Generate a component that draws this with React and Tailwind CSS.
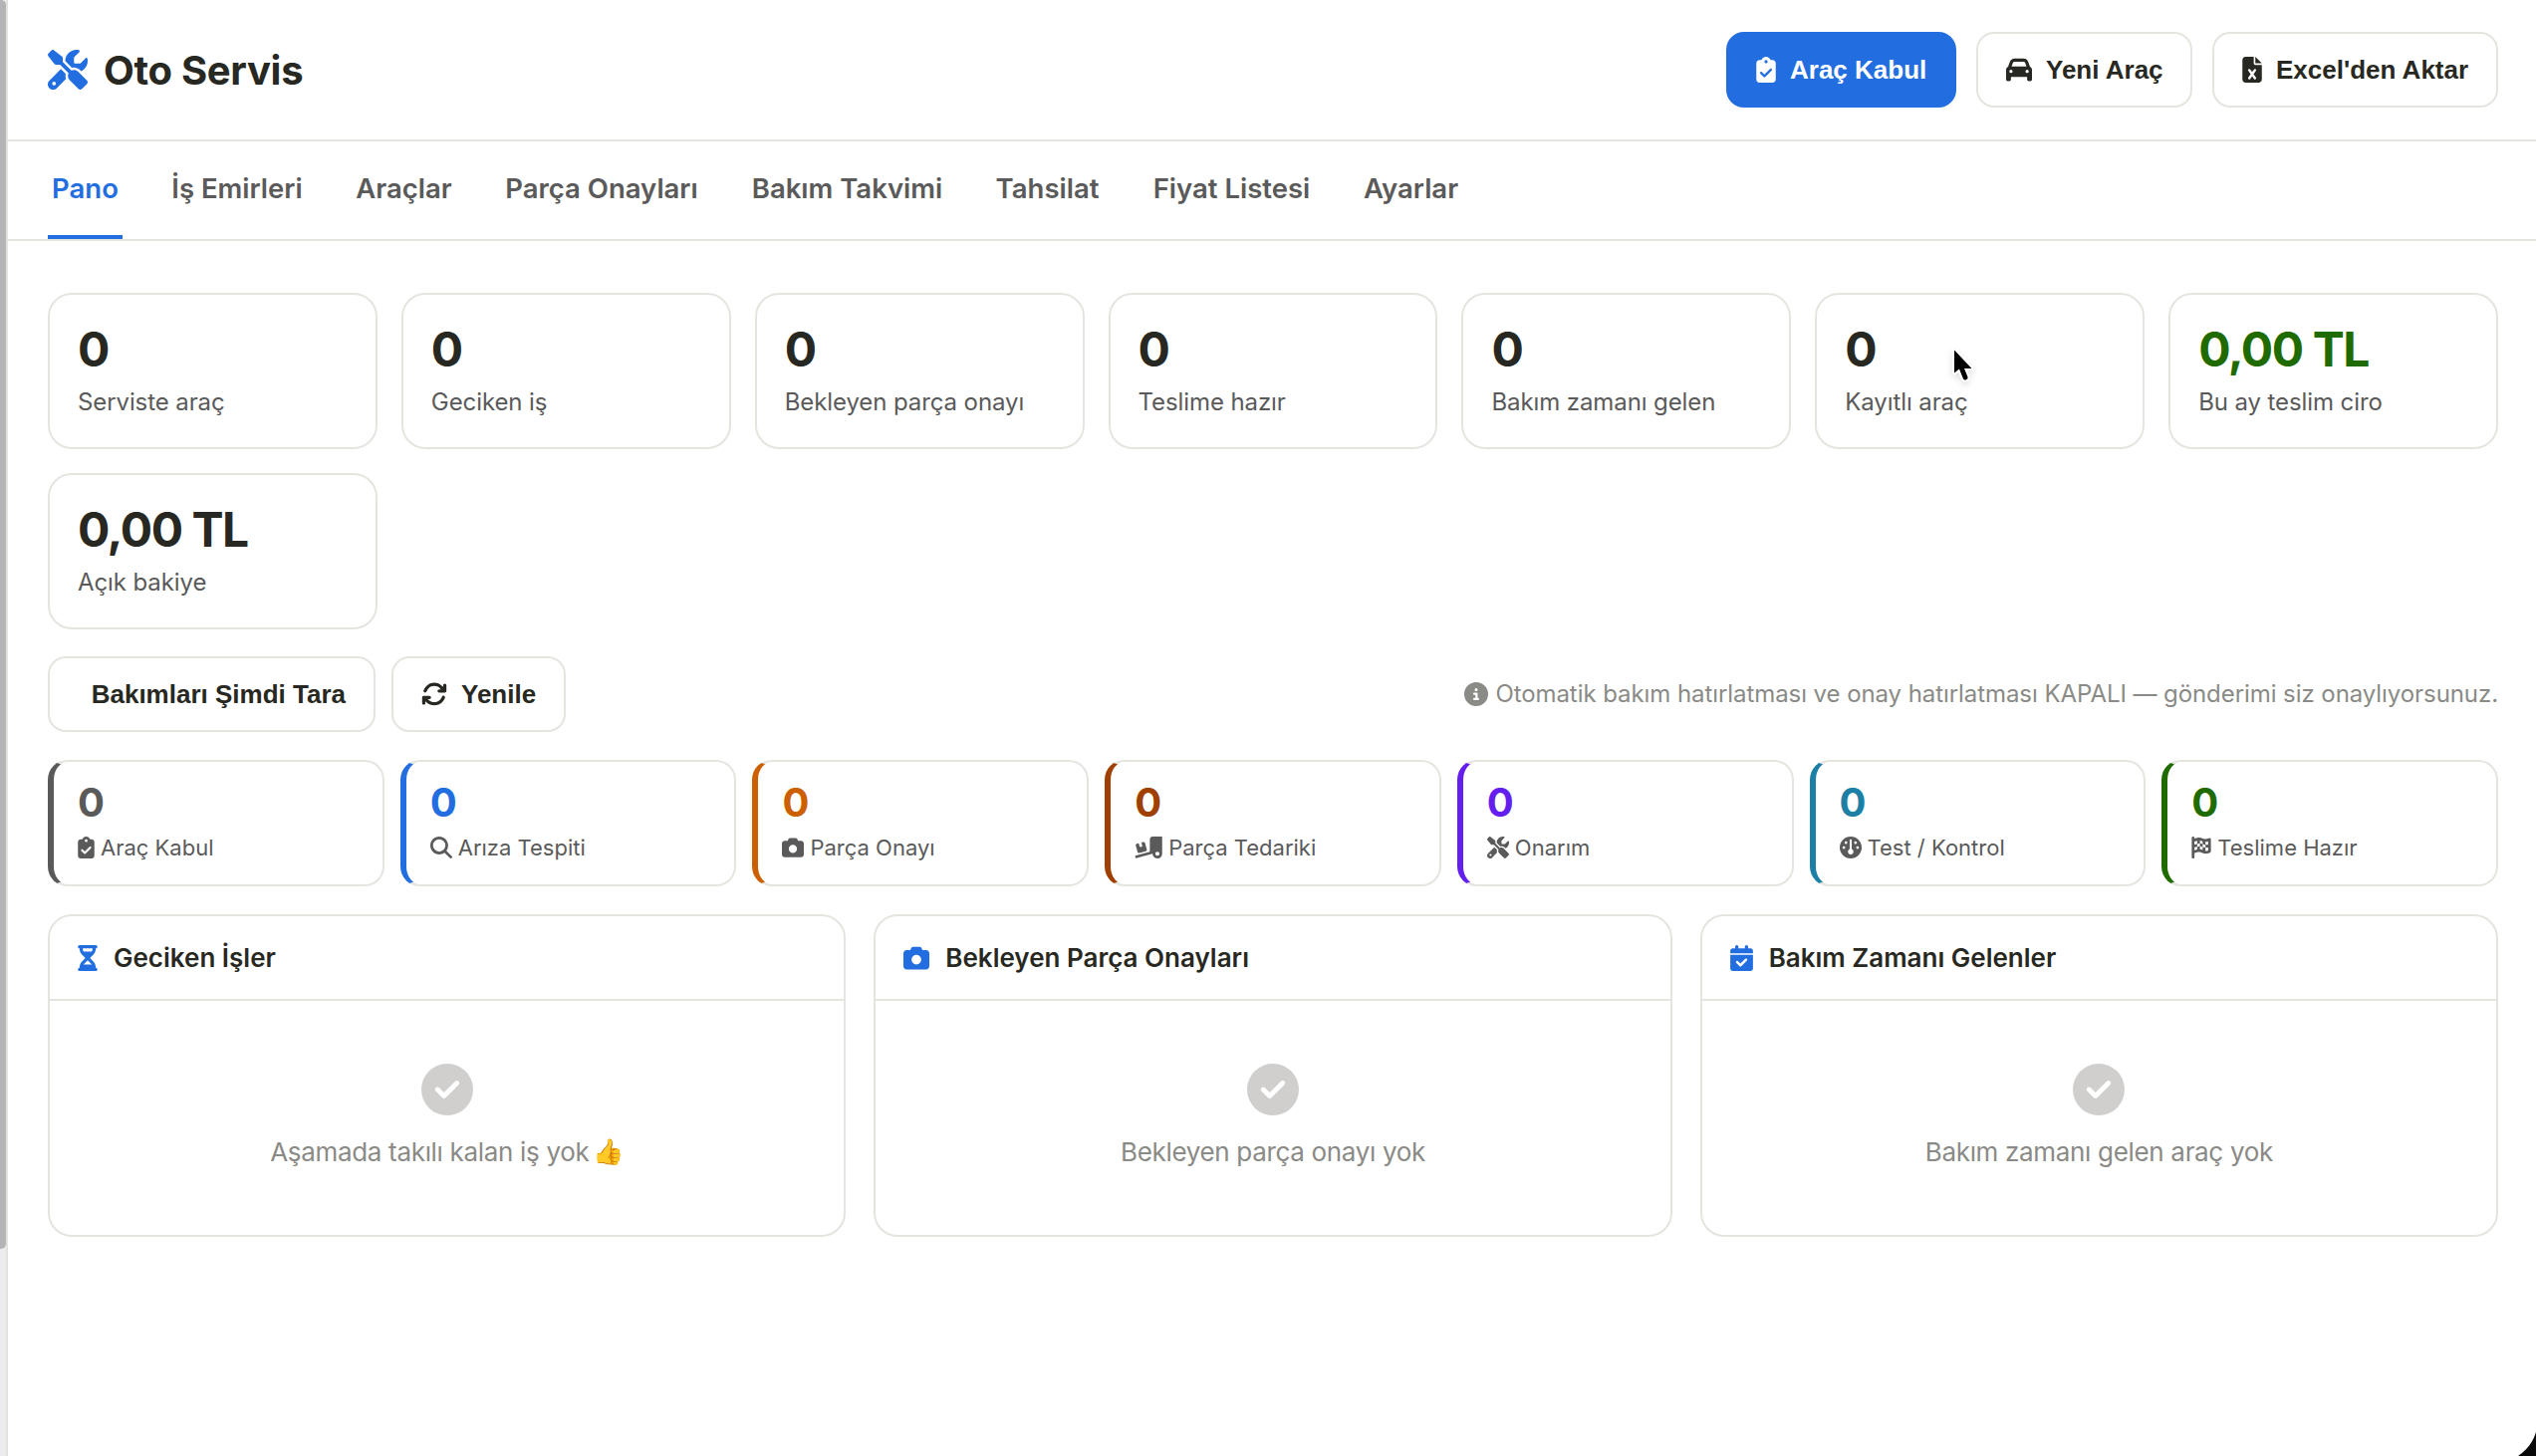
import { FaScrewdriverWrench, FaClipboardCheck, FaCar, FaFileExcel, FaArrowsRotate, FaCircleInfo, FaMagnifyingGlass, FaCamera, FaTruckRampBox, FaGauge, FaFlagCheckered, FaHourglassHalf, FaCalendarCheck, FaCircleCheck } from 'react-icons/fa6';

const tabs = [
  { label: 'Pano', cls: 'w-[75px]' },
  { label: 'İş Emirleri', cls: 'w-[142px]' },
  { label: 'Araçlar', cls: 'w-[105px]' },
  { label: 'Parça Onayları', cls: 'w-[204px]' },
  { label: 'Bakım Takvimi', cls: 'w-[201px]' },
  { label: 'Tahsilat', cls: 'w-[113px]' },
  { label: 'Fiyat Listesi', cls: 'w-[169px]' },
  { label: 'Ayarlar', cls: 'w-[103px]' },
];

const stats = [
  { value: '0', label: 'Serviste araç' },
  { value: '0', label: 'Geciken iş' },
  { value: '0', label: 'Bekleyen parça onayı' },
  { value: '0', label: 'Teslime hazır' },
  { value: '0', label: 'Bakım zamanı gelen' },
  { value: '0', label: 'Kayıtlı araç' },
  { value: '0,00 TL', label: 'Bu ay teslim ciro', color: 'text-[#1f6b00]' },
  { value: '0,00 TL', label: 'Açık bakiye' },
];

const stages = [
  { label: 'Araç Kabul', icon: FaClipboardCheck, size: 'w-[17px]', text: 'text-[#5a5a5a]', border: 'border-l-[#5a5a5a]' },
  { label: 'Arıza Tespiti', icon: FaMagnifyingGlass, size: 'w-[22px]', text: 'text-[#226ee0]', border: 'border-l-[#226ee0]' },
  { label: 'Parça Onayı', icon: FaCamera, size: 'w-[22px]', text: 'text-[#cc5f00]', border: 'border-l-[#cc5f00]' },
  { label: 'Parça Tedariki', icon: FaTruckRampBox, size: 'w-[28px]', text: 'text-[#a04000]', border: 'border-l-[#a04000]' },
  { label: 'Onarım', icon: FaScrewdriverWrench, size: 'w-[22px]', text: 'text-[#641eee]', border: 'border-l-[#641eee]' },
  { label: 'Test / Kontrol', icon: FaGauge, size: 'w-[22px]', text: 'text-[#1c80a6]', border: 'border-l-[#1c80a6]' },
  { label: 'Teslime Hazır', icon: FaFlagCheckered, size: 'w-[20px]', text: 'text-[#1f6b00]', border: 'border-l-[#1f6b00]' },
];

const panels = [
  { title: 'Geciken İşler', icon: FaHourglassHalf, size: 'w-[20px]', empty: 'Aşamada takılı kalan iş yok', emoji: '👍' },
  { title: 'Bekleyen Parça Onayları', icon: FaCamera, size: 'w-[26px]', empty: 'Bekleyen parça onayı yok' },
  { title: 'Bakım Zamanı Gelenler', icon: FaCalendarCheck, size: 'w-[23px]', empty: 'Bakım zamanı gelen araç yok' },
];

const Button = ({ icon: Icon, iconSize = 'w-[26px]', primary, children, className = '' }) => (
  <button
    className={`flex h-[76px] items-center gap-[14px] whitespace-nowrap rounded-[18px] border-2 px-7 font-['Liberation_Sans',Arial,sans-serif] text-[26px] font-bold ${primary ? 'border-[#226ee0] bg-[#226ee0] text-white' : 'border-[#e5e5e0] bg-white text-[#282822]'} ${className}`}
  >
    {Icon && <Icon className={`h-[26px] shrink-0 ${iconSize}`} />}
    {children}
  </button>
);

export default function App() {
  return (
    <div className="relative flex h-[1462px] w-[2546px] overflow-hidden bg-white font-['Inter',sans-serif] text-[#282822]">
      {/* Scroll rail */}
      <div className="h-full w-2 shrink-0 border-r-2 border-[#e2e2df] bg-[#ececec]">
        <div className="h-[1254px] w-[6px] rounded-r-[5px] bg-[#b4b4b4]" />
      </div>

      <div className="min-w-0 flex-1">
        {/* Header */}
        <header className="flex h-[142px] items-center justify-between border-b-2 border-[#e5e5e0] pl-10 pr-[38px]">
          <div className="flex items-center gap-4">
            <FaScrewdriverWrench className="size-10 text-[#226ee0]" />
            <h1 className="pt-[2px] text-[40px] font-bold tracking-[-0.0075em]">Oto Servis</h1>
          </div>
          <div className="flex gap-5">
            <Button icon={FaClipboardCheck} iconSize="w-[20px]" primary className="w-[231px]">Araç Kabul</Button>
            <Button icon={FaCar} className="w-[217px]">Yeni Araç</Button>
            <Button icon={FaFileExcel} iconSize="w-[20px]" className="w-[287px]">Excel'den Aktar</Button>
          </div>
        </header>

        {/* Tabs */}
        <nav className="flex h-[100px] gap-11 border-b-2 border-[#e5e5e0] pl-10">
          {tabs.map((tab, i) => (
            <a
              key={tab.label}
              className={`flex h-[98px] items-center justify-center whitespace-nowrap border-b-4 pt-px text-[27.5px] font-semibold ${tab.cls} ${i === 0 ? 'border-[#226ee0] text-[#226ee0]' : 'border-transparent text-[#5a5a5a]'}`}
            >
              {tab.label}
            </a>
          ))}
        </nav>

        <main className="pl-10 pr-[38px] pt-[52px]">
          {/* Stats */}
          <div className="grid grid-cols-7 gap-6">
            {stats.map((s) => (
              <div key={s.label} className="h-[157px] rounded-3xl border-2 border-[#e5e5e0] px-7 pt-[27px]">
                <div className={`text-[48px] font-bold leading-[56px] tracking-[-0.03em] ${s.color || ''}`}>{s.value}</div>
                <div className="mt-[7px] text-[24px] leading-9 tracking-[-0.004em] text-[#5a5a5a]">{s.label}</div>
              </div>
            ))}
          </div>

          {/* Toolbar */}
          <div className="mt-[27px] flex items-center gap-4">
            <Button className="w-[329px] justify-end">Bakımları Şimdi Tara</Button>
            <Button icon={FaArrowsRotate} className="w-[175px]">Yenile</Button>
            <p className="ml-auto flex items-center gap-[7px] text-[24px] tracking-[-0.003em] text-[#8a8a86]">
              <FaCircleInfo className="size-6" />
              Otomatik bakım hatırlatması ve onay hatırlatması KAPALI — gönderimi siz onaylıyorsunuz.
            </p>
          </div>

          {/* Stages */}
          <div className="mt-7 grid grid-cols-7 gap-4">
            {stages.map(({ label, icon: Icon, size, text, border }) => (
              <div key={label} className={`h-[127px] rounded-[20px] border-2 border-l-[6px] border-[#e5e5e0] pl-6 pt-[18px] ${border}`}>
                <div className={`text-[40px] font-bold leading-[46px] ${text}`}>0</div>
                <div className="mt-[6px] flex items-center gap-[6px] text-[22px] leading-8 text-[#5a5a5a]">
                  <Icon className={`h-[22px] shrink-0 ${size}`} />
                  {label}
                </div>
              </div>
            ))}
          </div>

          {/* Panels */}
          <div className="mt-7 grid grid-cols-3 gap-7">
            {panels.map(({ title, icon: Icon, size, empty, emoji }) => (
              <section key={title} className="h-[324px] rounded-3xl border-2 border-[#e5e5e0]">
                <h2 className="flex h-[85px] items-center gap-4 border-b-2 border-[#e5e5e0] px-7 text-[26px] font-semibold">
                  <Icon className={`h-[26px] text-[#226ee0] ${size}`} />
                  {title}
                </h2>
                <div className="flex flex-col items-center pt-[63px] text-[26px] text-[#8a8a86]">
                  <FaCircleCheck className="size-[52px] text-[#d0cfcd]" />
                  <p className="mt-[17px] flex items-center gap-1 leading-[39px] tracking-[-0.0125em]">
                    {empty}
                    {emoji && <span className="text-[25px]">{emoji}</span>}
                  </p>
                </div>
              </section>
            ))}
          </div>
        </main>
      </div>

      {/* Mouse pointer */}
      <svg className="absolute left-[1956px] top-[346px] drop-shadow-md" width="32" height="44" viewBox="0 0 32 44">
        <path
          d="M6 5.500V28.500L11 24.500L15 34.500Q16 36 18 35.200Q20 34.500 19.500 32.500L16 24H23.500Z"
          fill="#000"
          stroke="#fff"
          strokeWidth="4"
          strokeLinejoin="round"
          paintOrder="stroke"
        />
      </svg>

      {/* Window corner */}
      <svg className="absolute bottom-0 right-0" width="18" height="24" viewBox="0 0 18 24">
        <path d="M18 0C15 10 9 18 0 24h18z" fill="#0a0a0a" />
      </svg>
    </div>
  );
}
